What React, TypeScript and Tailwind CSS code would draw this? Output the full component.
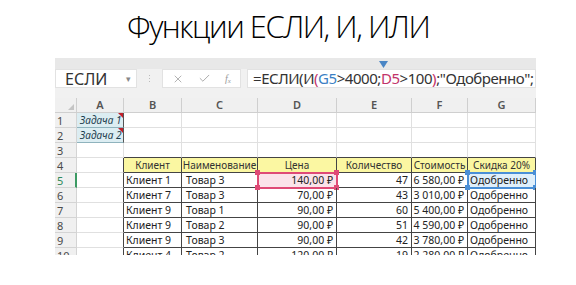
import { X, Check } from 'lucide-react';

const cols = ['', 'A', 'B', 'C', 'D', 'E', 'F', 'G'];

const rows = [
    ['Клиент 1', 'Товар 3', '140,00 ₽', '47', '6 580,00 ₽', 'Одобренно'],
    ['Клиент 7', 'Товар 3', '70,00 ₽', '43', '3 010,00 ₽', 'Одобренно'],
    ['Клиент 9', 'Товар 1', '90,00 ₽', '60', '5 400,00 ₽', 'Одобренно'],
    ['Клиент 9', 'Товар 2', '90,00 ₽', '51', '4 590,00 ₽', 'Одобренно'],
    ['Клиент 9', 'Товар 3', '90,00 ₽', '42', '3 780,00 ₽', 'Одобренно'],
    ['Клиент 4', 'Товар 2', '120,00 ₽', '19', '2 280,00 ₽', 'Одобренно'],
];

const heads = ['Клиент', 'Наименование', 'Цена', 'Количество', 'Стоимость', 'Скидка 20%'];

const font = { fontFamily: '"Noto Sans", "Open Sans", sans-serif' };

function Corners({ color }: { color: string }) {
    return (
        <>
            <span className={`absolute -left-[3px] -top-[3px] w-[5px] h-[5px] ${color}`} />
            <span className={`absolute -right-[3px] -top-[3px] w-[5px] h-[5px] ${color}`} />
            <span className={`absolute -left-[3px] -bottom-[3px] w-[5px] h-[5px] ${color}`} />
            <span className={`absolute -right-[3px] -bottom-[3px] w-[5px] h-[5px] ${color}`} />
        </>
    );
}

function RowHead({ n }: { n: number }) {
    return (
        <div className={`bg-[#f0f0f0] border-r border-b border-[#d4d4d4] pl-[2px] text-[11px] leading-[15px] ${n === 5 ? 'text-[#2f8a5a] border-r-2 border-r-[#3c9a63]' : 'text-[#4a4a4a]'}`}>
            {n}
        </div>
    );
}

function Blank({ dark = '' }: { dark?: string }) {
    return <div className={`border-r border-b border-[#e0e0e0] ${dark}`} />;
}

export default function App() {
    return (
        <div className="w-[576px] h-[285px] bg-white overflow-hidden" style={font}>
            <div className="h-[58px] pt-[11px] pl-[127px]">
                <h1
                    className="text-[31px] leading-none text-black font-light tracking-[-1.5px]"
                    style={{ fontFamily: '"Open Sans", "Noto Sans", sans-serif' }}
                >
                    Функции ЕСЛИ, И, ИЛИ
                </h1>
            </div>

            <div className="ml-[55px] w-[481px] h-[197px] overflow-hidden bg-[#f1f1f1]">
                {/* ribbon edge */}
                <div className="h-[11px] bg-[#e8e8e8] flex items-end pl-[324px]">
                    <svg width="9" height="7" viewBox="0 0 9 7" className="mb-[1px]">
                        <path d="M0 0 L9 0 L4.5 7 Z" fill="#4a86c5" />
                    </svg>
                </div>

                {/* formula bar */}
                <div className="h-[29px] flex items-start">
                    <div className="w-[82px] h-[19px] bg-white border border-[#e2e2e2] flex items-center pl-[9px] pr-[5px]">
                        <span className="text-[16px] text-[#333] leading-none flex-1">ЕСЛИ</span>
                        <span className="text-[9px] text-[#888]">▾</span>
                    </div>
                    <div className="w-[25px] h-[19px] flex flex-col items-center justify-center gap-[2px]">
                        <span className="w-[1px] h-[1px] bg-[#bbb]" />
                        <span className="w-[1px] h-[1px] bg-[#bbb]" />
                        <span className="w-[1px] h-[1px] bg-[#bbb]" />
                    </div>
                    <div className="w-[79px] h-[19px] bg-white border border-[#e2e2e2] flex items-center pl-[9px] gap-[14px] text-[#9a9a9a]">
                        <X size={12} strokeWidth={1.5} />
                        <Check size={13} strokeWidth={1.5} />
                        <span className="italic text-[10px] leading-none" style={{ fontFamily: '"Liberation Serif", serif' }}>
                            f<sub className="text-[7px]">x</sub>
                        </span>
                    </div>
                    <div className="ml-[6px] flex-1 h-[19px] bg-white border border-[#e2e2e2] pl-[5px] flex items-center overflow-hidden whitespace-nowrap">
                        <span className="text-[15px] leading-none text-[#333] tracking-[-0.45px]">
                            =ЕСЛИ(И<span className="text-[#c2336a]">(</span>
                            <span className="text-[#3b7fc4]">G5</span>&gt;4000;
                            <span className="text-[#c2336a]">D5</span>&gt;100<span className="text-[#c2336a]">)</span>;"Одобренно";
                        </span>
                    </div>
                </div>

                {/* sheet */}
                <div className="grid grid-cols-[22px_47px_58px_76px_79px_75px_56px_68px] auto-rows-[15px] bg-white text-[10.5px] text-[#222]">
                    {cols.map((c, i) =>
                        i === 0 ? (
                            <div key={i} className="bg-[#f0f0f0] border-r border-b border-[#cfcfcf] flex items-end justify-end p-[2px]">
                                <svg width="6" height="6" viewBox="0 0 6 6">
                                    <path d="M6 0 L6 6 L0 6 Z" fill="#c4c4c4" />
                                </svg>
                            </div>
                        ) : (
                            <div key={i} className="bg-[#f0f0f0] border-r border-b border-[#cfcfcf] text-center font-semibold text-[11px] leading-[14px] text-[#555]">
                                {c}
                            </div>
                        )
                    )}

                    {[1, 2].map((n) => (
                        <div key={n} className="contents">
                            <RowHead n={n} />
                            <div className="relative bg-[#dcedf2] border-r border-b border-r-[#555] border-b-[#8fb3bd] pl-[3px] italic text-[10px] leading-[15px] text-[#1e3d4f] whitespace-nowrap overflow-hidden">
                                Задача {n}
                                <span className="absolute right-0 top-0 w-0 h-0 border-l-[5px] border-l-transparent border-t-[5px] border-t-[#c0202a]" />
                            </div>
                            {[0, 1, 2, 3, 4, 5].map((j) => <Blank key={j} />)}
                        </div>
                    ))}

                    <RowHead n={3} />
                    <Blank />
                    {[0, 1, 2, 3, 4, 5].map((j) => <Blank key={j} dark="border-b-[#444]" />)}

                    <RowHead n={4} />
                    <Blank dark="border-r-[#444]" />
                    {heads.map((h) => (
                        <div key={h} className="bg-[#fbf7a2] border-r border-b border-[#444] text-center text-[10px] leading-[15px] text-[#333] whitespace-nowrap overflow-hidden">
                            {h}
                        </div>
                    ))}

                    {rows.map((r, i) => {
                        const n = i + 5;
                        return (
                            <div key={n} className="contents">
                                <RowHead n={n} />
                                <Blank dark="border-r-[#444]" />
                                <div className="border-r border-b border-[#444] pl-[2px] leading-[15px] whitespace-nowrap">{r[0]}</div>
                                <div className="border-r border-b border-[#444] pl-[4px] leading-[15px] whitespace-nowrap">{r[1]}</div>
                                <div className={`relative border-r border-b border-[#444] pr-[3px] text-right leading-[15px] whitespace-nowrap ${n === 5 ? 'bg-[#fbe3ea] outline-2 outline-[#df4a76] -outline-offset-1' : ''}`}>
                                    {r[2]}
                                    {n === 5 && <Corners color="bg-[#df4a76]" />}
                                </div>
                                <div className="border-r border-b border-[#444] pr-[3px] text-right leading-[15px]">{r[3]}</div>
                                <div className="border-r border-b border-[#444] pr-[3px] text-right leading-[15px] whitespace-nowrap">{r[4]}</div>
                                <div className={`relative border-r border-b border-[#444] pl-[2px] leading-[15px] whitespace-nowrap ${n === 5 ? 'bg-[#dfeffb] outline-2 outline-[#4a8fd6] -outline-offset-1' : ''}`}>
                                    {r[5]}
                                    {n === 5 && <Corners color="bg-[#4a8fd6]" />}
                                </div>
                            </div>
                        );
                    })}
                </div>
            </div>
        </div>
    );
}
